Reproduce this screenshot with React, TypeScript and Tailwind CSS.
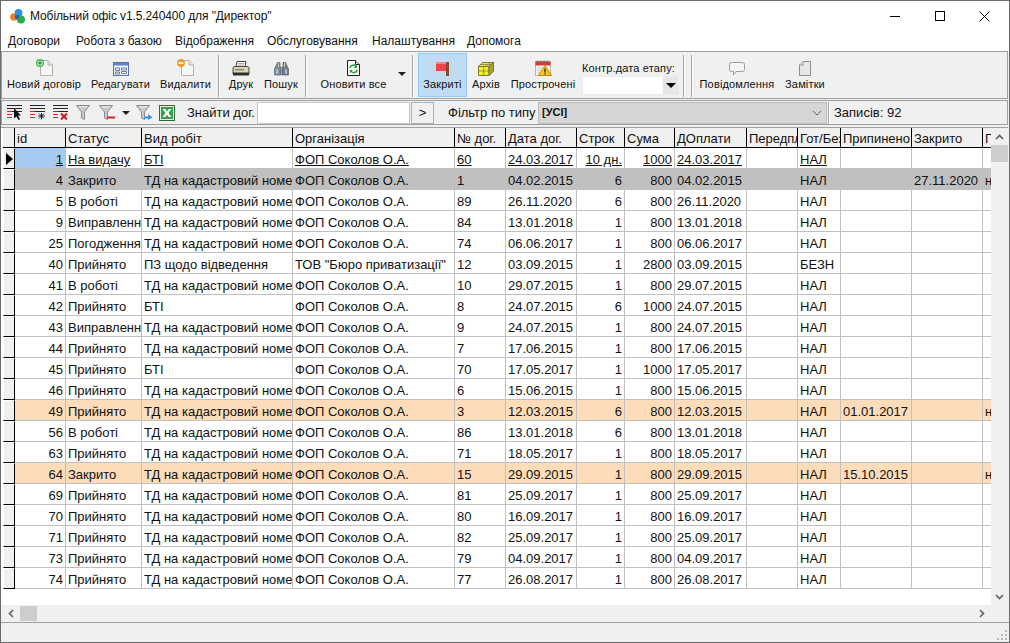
import React from "react";

const TD = "ТД на кадастровий номе";
const FOP = "ФОП Соколов О.А.";
type R = { id: string; st: string; vid: string; org?: string; no: string; d: string; srok: string; sum: string; nal?: string; stop?: string; closed?: string; n?: boolean; tone?: "gray" | "orange" | "first" };
const rows: R[] = [
  { id: "1", st: "На видачу", vid: "БТІ", no: "60", d: "24.03.2017", srok: "10 дн.", sum: "1000", tone: "first" },
  { id: "4", st: "Закрито", vid: TD, no: "1", d: "04.02.2015", srok: "6", sum: "800", closed: "27.11.2020", n: true, tone: "gray" },
  { id: "5", st: "В роботі", vid: TD, no: "89", d: "26.11.2020", srok: "6", sum: "800" },
  { id: "9", st: "Виправлення", vid: TD, no: "84", d: "13.01.2018", srok: "1", sum: "800" },
  { id: "25", st: "Погодження", vid: TD, no: "74", d: "06.06.2017", srok: "1", sum: "800" },
  { id: "40", st: "Прийнято", vid: "ПЗ щодо відведення", org: 'ТОВ "Бюро приватизації"', no: "12", d: "03.09.2015", srok: "1", sum: "2800", nal: "БЕЗН" },
  { id: "41", st: "В роботі", vid: TD, no: "10", d: "29.07.2015", srok: "1", sum: "800" },
  { id: "42", st: "Прийнято", vid: "БТІ", no: "8", d: "24.07.2015", srok: "6", sum: "1000" },
  { id: "43", st: "Виправлення", vid: TD, no: "9", d: "24.07.2015", srok: "1", sum: "800" },
  { id: "44", st: "Прийнято", vid: TD, no: "7", d: "17.06.2015", srok: "1", sum: "800" },
  { id: "45", st: "Прийнято", vid: "БТІ", no: "70", d: "17.05.2017", srok: "1", sum: "1000" },
  { id: "46", st: "Прийнято", vid: TD, no: "6", d: "15.06.2015", srok: "1", sum: "800" },
  { id: "49", st: "Прийнято", vid: TD, no: "3", d: "12.03.2015", srok: "6", sum: "800", stop: "01.01.2017", n: true, tone: "orange" },
  { id: "56", st: "В роботі", vid: TD, no: "86", d: "13.01.2018", srok: "6", sum: "800" },
  { id: "63", st: "Прийнято", vid: TD, no: "71", d: "18.05.2017", srok: "1", sum: "800" },
  { id: "64", st: "Закрито", vid: TD, no: "15", d: "29.09.2015", srok: "1", sum: "800", stop: "15.10.2015", n: true, tone: "orange" },
  { id: "69", st: "Прийнято", vid: TD, no: "81", d: "25.09.2017", srok: "1", sum: "800" },
  { id: "70", st: "Прийнято", vid: TD, no: "80", d: "16.09.2017", srok: "1", sum: "800" },
  { id: "71", st: "Прийнято", vid: TD, no: "82", d: "25.09.2017", srok: "1", sum: "800" },
  { id: "73", st: "Прийнято", vid: TD, no: "79", d: "04.09.2017", srok: "1", sum: "800" },
  { id: "74", st: "Прийнято", vid: TD, no: "77", d: "26.08.2017", srok: "1", sum: "800" },
];

const cols = "grid grid-cols-[12px_51px_76px_151px_162px_51px_71px_48px_50px_72px_51px_43px_71px_71px_8px]";
const heads = ["id", "Статус", "Вид робіт", "Організація", "№ дог.", "Дата дог.", "Строк", "Сума", "ДОплати", "Передплата", "Гот/Безг", "Припинено", "Закрито", "Передано"];

function Logo() {
  return (
    <svg width="16" height="15" viewBox="0 0 16 15">
      <circle cx="4" cy="8" r="3.8" fill="#ee7d2a" />
      <circle cx="8.5" cy="4" r="3.9" fill="#2d93e0" />
      <circle cx="11" cy="10.5" r="4" fill="#27b04a" />
      <circle cx="7" cy="8" r="2.2" fill="#2a5fa6" />
    </svg>
  );
}
function Doc({ badge }: { badge?: string }) {
  return (
    <svg width="17" height="17" viewBox="0 0 17 17">
      <path d="M4.5 1.5H12L16.5 6V16.5H4.5Z" fill="#f6f6f4" stroke="#b5b2a8" />
      <path d="M12 1.5V6H16.5" fill="#e3e1da" stroke="#b5b2a8" />
      {badge === "add" && (
        <g>
          <circle cx="4" cy="4" r="4" fill="#3fb44a" />
          <circle cx="4" cy="4" r="2.6" fill="#fff" />
          <path d="M4 2V6M2 4H6" stroke="#2c9a38" strokeWidth="1.5" />
        </g>
      )}
      {badge === "del" && (
        <g>
          <circle cx="4" cy="4" r="4" fill="#ef9a2d" />
          <path d="M1.5 4H6.5" stroke="#fff" strokeWidth="1.6" />
        </g>
      )}
    </svg>
  );
}
function EditIco() {
  return (
    <svg width="16" height="14" viewBox="0 0 16 14">
      <rect x="0.5" y="0.5" width="15" height="13" fill="#eef3fa" stroke="#5874a8" />
      <rect x="1" y="1" width="14" height="2.5" fill="#5d86c8" />
      <path d="M2.5 6H6.5V8.5H2.5ZM2.5 10H6.5V12H2.5ZM8.5 6H13.5V8H8.5ZM8.5 9.5H13.5V11.5H8.5Z" fill="none" stroke="#4b6596" strokeWidth="0.8" />
    </svg>
  );
}
function Printer() {
  return (
    <svg width="18" height="15" viewBox="0 0 18 15">
      <path d="M5 0.5H14L13 6H4Z" fill="#fff" stroke="#444" />
      <path d="M6 2.5H12.5M5.8 4H12" stroke="#888" strokeWidth="0.7" />
      <path d="M1 7Q1 5.5 3 5.5H15Q17 5.5 17 7V13H1Z" fill="#d8d5b8" stroke="#4a4a3c" />
      <rect x="1" y="11.5" width="16" height="3" fill="#2f2f2a" />
      <rect x="3" y="8" width="9" height="1.5" fill="#8d8a6d" />
    </svg>
  );
}
function Binoc() {
  return (
    <svg width="15" height="14" viewBox="0 0 15 14">
      <path d="M3.5 0.5H6V5H7V13H0.5V7Z" fill="#7b8ba0" stroke="#4a4f58" strokeWidth="0.6" />
      <path d="M11.5 0.5H9V5H8V13H14.5V7Z" fill="#6d7d90" stroke="#4a4f58" strokeWidth="0.6" />
      <path d="M3 7V12M12 7V12" stroke="#eeeeee" />
      <rect x="4" y="1" width="1" height="4" fill="#d9c9a8" />
      <rect x="10" y="1" width="1" height="4" fill="#d9c9a8" />
    </svg>
  );
}
function Refresh() {
  return (
    <svg width="13" height="16" viewBox="0 0 13 16">
      <path d="M0.5 0.5H8.5L12.5 4.5V15.5H0.5Z" fill="#fff" stroke="#222" />
      <path d="M8.5 0.5V4.5H12.5" fill="#ddd" stroke="#222" />
      <path d="M3 8A3.2 3.2 0 0 1 9 6.8M10 9.5A3.2 3.2 0 0 1 4 11" fill="none" stroke="#1fa33a" strokeWidth="1.5" />
      <path d="M10 4.8V8H7ZM3 13V10H6Z" fill="#1fa33a" />
    </svg>
  );
}
function Flag() {
  return (
    <svg width="13" height="14" viewBox="0 0 13 14">
      <rect x="0" y="0" width="10" height="9" fill="#ef4349" />
      <rect x="0" y="0" width="10" height="2" fill="#f8868a" />
      <rect x="10" y="0" width="3" height="14" fill="#8a4a32" />
    </svg>
  );
}
function Cube() {
  return (
    <svg width="16" height="14" viewBox="0 0 16 14">
      <path d="M0.5 4.5H11V13.5H0.5Z" fill="#f5ed2f" stroke="#7d7a2a" />
      <path d="M0.5 4.5L4.5 0.5H15.5L11 4.5Z" fill="#e4df70" stroke="#7d7a2a" />
      <path d="M11 4.5L15.5 0.5V9.5L11 13.5Z" fill="#a9a23a" stroke="#7d7a2a" />
      <path d="M0.5 9H11M5.7 4.5V13.5M3 2.5H13.5M8 4.5L12 0.5" stroke="#7d7a2a" strokeWidth="0.7" fill="none" />
    </svg>
  );
}
function Overdue() {
  return (
    <svg width="17" height="16" viewBox="0 0 17 16">
      <rect x="0.5" y="1.5" width="15" height="14" fill="#f7f4ec" stroke="#b9b5aa" />
      <rect x="0.5" y="1.5" width="15" height="4" fill="#cf3f36" />
      <path d="M3 0.5V3M6 0.5V3M9 0.5V3M12 0.5V3" stroke="#666" />
      <path d="M2 8H7M2 10.5H5M2 13H5" stroke="#c8c3b5" />
      <path d="M10 5.5L16.5 15.5H3.5Z" fill="#f8c91a" stroke="#c48a10" />
      <path d="M10 8.5V12.5M10 13.3V14.5" stroke="#222" strokeWidth="1.3" />
    </svg>
  );
}
function Bubble() {
  return (
    <svg width="16" height="14" viewBox="0 0 16 14">
      <path d="M2.5 0.5H13.5Q15.5 0.5 15.5 2.5V7.5Q15.5 9.5 13.5 9.5H7L4.5 13V9.5H2.5Q0.5 9.5 0.5 7.5V2.5Q0.5 0.5 2.5 0.5Z" fill="#f5f5f3" stroke="#9c9c98" />
    </svg>
  );
}
function Note() {
  return (
    <svg width="12" height="15" viewBox="0 0 12 15">
      <path d="M4 0.5H11.5V14.5H0.5V4Z" fill="#e7e7e5" stroke="#8e8e8a" />
      <path d="M4 0.5V4H0.5" fill="#f8f8f8" stroke="#8e8e8a" />
    </svg>
  );
}
function Lines({ children, rows = 3 }: { children?: React.ReactNode; rows?: number }) {
  return (
    <svg width="16" height="15" viewBox="0 0 16 15">
      <path d="M0 0.5H15M0 3.5H15" stroke="#222" />
      <path d="M0 6.5H5M0 9.5H5M0 12.5H5" stroke="#e02020" />
      <path d="M5 6.5H15" stroke="#222" />
      {children}
    </svg>
  );
}
function Funnel({ children }: { children?: React.ReactNode }) {
  return (
    <svg width="17" height="15" viewBox="0 0 17 15">
      <path d="M0.5 0.5H13.5L8.5 7V14.5L5.5 13V7Z" fill="#c9c9c9" stroke="#8c8c8c" />
      <path d="M3 2H11" stroke="#f2f2f2" />
      {children}
    </svg>
  );
}
function Excel() {
  return (
    <svg width="16" height="16" viewBox="0 0 16 16">
      <rect x="0.5" y="0.5" width="15" height="15" fill="#dfeedd" stroke="#2c6e3a" />
      <rect x="2" y="2" width="12" height="12" fill="#3f9a52" />
      <path d="M3.5 4H6.5L8 6.5L9.5 4H12.5L9.5 8L12.5 12H9.5L8 9.5L6.5 12H3.5L6.5 8Z" fill="#f4f8f0" />
    </svg>
  );
}
function Caret() {
  return <div className="w-0 h-0 border-l-[4px] border-r-[4px] border-t-[4px] border-l-transparent border-r-transparent border-t-[#222]" />;
}

function Btn({ w, label, children, active }: { w: string; label: string; children: React.ReactNode; active?: boolean }) {
  return (
    <div className={`${w} shrink-0 flex flex-col items-center ${active ? "bg-[#c0dcf3] border border-[#90c8f6] h-[44px] mt-[1px]" : "h-[46px]"}`}>
      <div className={`${active ? "h-[22px]" : "h-[24px]"} flex items-end justify-center`}>{children}</div>
      <div className="mt-[2px] text-[11px] leading-[13px] whitespace-nowrap tracking-[0.15px]">{label}</div>
    </div>
  );
}
function Sep() {
  return <div className="w-[2px] h-[42px] mt-[3px] bg-[#a6a6a6] border-r border-[#fafafa] shrink-0" />;
}

function Cell({ children, right, under, className = "" }: { children?: React.ReactNode; right?: boolean; under?: boolean; className?: string }) {
  return (
    <div className={`h-[21px] border-r border-b overflow-hidden whitespace-nowrap leading-[24px] px-[2px] ${right ? "text-right" : ""} ${under ? "underline" : ""} ${className}`}>
      {children}
    </div>
  );
}

export default function App() {
  return (
    <div className="w-[1010px] h-[643px] bg-[#f0f0f0] text-[#111] border-l border-t border-r border-[#6b6b6b] flex flex-col overflow-hidden text-[12px] font-[Liberation_Sans]">
      {/* Title bar */}
      <div className="h-[30px] bg-white flex items-center shrink-0">
        <div className="ml-[9px] w-[20px]"><Logo /></div>
        <div className="text-[12px] tracking-[-0.1px]">Мобільний офіс v1.5.240400 для "Директор"</div>
        <div className="ml-auto flex mr-[2px]">
          <div className="w-[45px] h-[30px] flex items-center justify-center">
            <div className="w-[10px] h-[1px] bg-black" />
          </div>
          <div className="w-[45px] h-[30px] flex items-center justify-center">
            <div className="w-[10px] h-[10px] border border-black" />
          </div>
          <div className="w-[45px] h-[30px] flex items-center justify-center">
            <svg width="11" height="11" viewBox="0 0 11 11"><path d="M0.5 0.5L10.5 10.5M10.5 0.5L0.5 10.5" stroke="#000" fill="none" /></svg>
          </div>
        </div>
      </div>
      {/* Menu */}
      <div className="h-[20px] bg-white flex items-center pl-[7px] shrink-0">
        <span className="w-[68px]">Договори</span>
        <span className="w-[99px]">Робота з базою</span>
        <span className="w-[92px]">Відображення</span>
        <span className="w-[105px]">Обслуговування</span>
        <span className="w-[95px]">Налаштування</span>
        <span>Допомога</span>
      </div>
      {/* Main toolbar */}
      <div className="h-[48px] border border-[#a0a0a0] bg-[#f0f0f0] flex items-start shrink-0 mr-[1px]">
        <Btn w="w-[84px]" label="Новий договір"><Doc badge="add" /></Btn>
        <Btn w="w-[69px]" label="Редагувати"><EditIco /></Btn>
        <Btn w="w-[61px]" label="Видалити"><Doc badge="del" /></Btn>
        <div className="w-[2px]" />
        <Sep />
        <Btn w="w-[42px]" label="Друк"><Printer /></Btn>
        <Btn w="w-[38px]" label="Пошук"><Binoc /></Btn>
        <div className="w-[5px]" />
        <Sep />
        <Btn w="w-[93px]" label="Оновити все"><Refresh /></Btn>
        <div className="w-[8px] -ml-[2px] flex justify-center mt-[20px]"><Caret /></div>
        <div className="w-[6px]" />
        <Sep />
        <div className="w-[4px]" />
        <Btn w="w-[49px]" label="Закриті" active><Flag /></Btn>
        <Btn w="w-[38px]" label="Архів"><Cube /></Btn>
        <Btn w="w-[76px]" label="Прострочені"><Overdue /></Btn>
        <div className="w-[97px] ml-[1px] shrink-0">
          <div className="text-[11px] leading-[13px] mt-[10px] tracking-[0.15px]">Контр.дата етапу:</div>
          <div className="mt-[1px] h-[19px] bg-white border border-[#ececec] flex justify-end">
            <div className="w-[16px] h-[17px] bg-[#e6e6e6] border-l border-[#f8f8f8] flex items-center justify-center">
              <div className="w-0 h-0 border-l-[5px] border-r-[5px] border-t-[5px] border-l-transparent border-r-transparent border-t-black" />
            </div>
          </div>
        </div>
        <div className="w-[4px]" />
        <Sep />
        <div className="w-[6px]" />
        <Sep />
        <Btn w="w-[88px]" label="Повідомлення"><Bubble /></Btn>
        <Btn w="w-[48px]" label="Замітки"><Note /></Btn>
      </div>
      {/* Second toolbar */}
      <div className="h-[25px] border border-[#a0a0a0] bg-[#f0f0f0] flex items-center shrink-0 mr-[1px] mt-[1px] text-[13px]">
        <div className="w-[5px]" />
        <div className="w-[23px]"><Lines><path d="M7 3L7 13.5L9.5 11.5L11.5 15L13 14L11 10.5H14Z" fill="#111" /></Lines></div>
        <div className="w-[23px]"><Lines><path d="M8 11H15M11.5 8V14.5M9 8.5L14 13.5M14 8.5L9 13.5" stroke="#222" strokeWidth="1" /></Lines></div>
        <div className="w-[23px]"><Lines><path d="M8 8.5L14 14.5M14 8.5L8 14.5" stroke="#d01818" strokeWidth="2" /></Lines></div>
        <div className="w-[23px]"><Funnel /></div>
        <div className="w-[23px]"><Funnel><path d="M8 12.5H16" stroke="#d32020" strokeWidth="2" /></Funnel></div>
        <div className="w-[14px] flex"><Caret /></div>
        <div className="w-[23px]"><Funnel><path d="M8 11.5H12V9L16.5 12.5L12 15V13.5H8Z" fill="#3b8fe0" /></Funnel></div>
        <div className="w-[28px]"><Excel /></div>
        <div className="w-[70px]">Знайти дог.</div>
        <div className="w-[153px] h-[22px] bg-white border border-[#c8c8c8]" />
        <div className="w-[23px] h-[22px] ml-[1px] bg-[#f0f0f0] border border-[#b0b0b0] flex items-center justify-center">&gt;</div>
        <div className="w-[14px]" />
        <div className="w-[90px]">Фільтр по типу</div>
        <div className="w-[289px] h-[22px] bg-[#d6d6d6] border border-[#bdbdbd] flex items-center pl-[3px] text-[11px] font-bold">
          <span>[УСІ]</span>
          <svg className="ml-auto mr-[4px]" width="10" height="6" viewBox="0 0 10 6"><path d="M1 1L5 5L9 1" fill="none" stroke="#666" /></svg>
        </div>
        <div className="w-[2px] h-[22px] bg-[#a6a6a6] border-r border-white mx-[1px]" />
        <div className="pl-[3px]">Записів: 92</div>
      </div>
      {/* Grid area */}
      <div className="mt-[2px] flex-1 min-h-0 flex flex-col border-t border-[#a0a0a0] mr-[1px]">
        <div className="flex-1 min-h-0 flex bg-white">
          <div className="w-[990px] shrink-0 flex flex-col overflow-hidden pl-[2px] text-[13px]">
            <div className={`${cols} h-[20px] bg-[#f0f0f0] border-b border-black shrink-0`}>
              <div className="border-r border-black" />
              {heads.map((h, i) => (
                <div key={h} className={`overflow-hidden whitespace-nowrap leading-[21px] pl-[2px] ${i < 13 ? "border-r border-black" : ""}`}>{h}</div>
              ))}
            </div>
            {rows.map((r) => {
              const first = r.tone === "first";
              const bg = r.tone === "gray" ? "bg-[#c0c0c0]" : r.tone === "orange" ? "bg-[#fddcb9]" : "bg-white";
              const c = "border-[#c0c0c0]";
              const nal = r.nal ?? "НАЛ";
              return (
                <div key={r.id} className={`${cols} ${bg} shrink-0`}>
                  <div className="h-[21px] bg-[#f0f0f0] border-r border-b border-r-black border-b-black border-t border-l border-t-white border-l-white flex items-center">
                    {first && <div className="w-0 h-0 ml-[2px] border-l-[7px] border-y-[6px] border-l-black border-y-transparent" />}
                  </div>
                  <Cell right under={first} className={`${c} ${first ? "bg-[#a6caf0]" : ""}`}>{r.id}</Cell>
                  <Cell under={first} className={c}>{r.st}</Cell>
                  <Cell under={first} className={c}>{r.vid}</Cell>
                  <Cell under={first} className={c}>{r.org ?? FOP}</Cell>
                  <Cell under={first} className={c}>{r.no}</Cell>
                  <Cell under={first} className={c}>{r.d}</Cell>
                  <Cell right under={first} className={c}>{r.srok}</Cell>
                  <Cell right under={first} className={c}>{r.sum}</Cell>
                  <Cell under={first} className={c}>{r.d}</Cell>
                  <Cell className={c} />
                  <Cell under={first} className={c}>{nal}</Cell>
                  <Cell className={c}>{r.stop}</Cell>
                  <Cell className={c}>{r.closed}</Cell>
                  <div className={`h-[21px] border-b overflow-hidden leading-[24px] pl-[2px] ${c}`}>{r.n ? "н" : ""}</div>
                </div>
              );
            })}
          </div>
          {/* Vertical scrollbar */}
          <div className="w-[17px] shrink-0 bg-[#f0f0f0] flex flex-col items-center">
            <div className="h-[17px] flex items-center justify-center">
              <svg width="9" height="6" viewBox="0 0 9 6"><path d="M1 5L4.5 1.5L8 5" fill="none" stroke="#606060" strokeWidth="1.6" /></svg>
            </div>
            <div className="w-full h-[17px] bg-[#cdcdcd]" />
            <div className="mt-auto h-[17px] flex items-center justify-center">
              <svg width="9" height="6" viewBox="0 0 9 6"><path d="M1 1L4.5 4.5L8 1" fill="none" stroke="#606060" strokeWidth="1.6" /></svg>
            </div>
          </div>
        </div>
        {/* Horizontal scrollbar */}
        <div className="h-[16px] bg-[#f0f0f0] flex items-center shrink-0">
          <div className="w-[19px] flex justify-center">
            <svg width="6" height="9" viewBox="0 0 6 9"><path d="M5 1L1.5 4.5L5 8" fill="none" stroke="#606060" strokeWidth="1.6" /></svg>
          </div>
          <div className="w-[17px] h-[15px] bg-[#cdcdcd]" />
          <div className="ml-auto mr-[23px]">
            <svg width="6" height="9" viewBox="0 0 6 9"><path d="M1 1L4.5 4.5L1 8" fill="none" stroke="#606060" strokeWidth="1.6" /></svg>
          </div>
        </div>
      </div>
      {/* Status bar */}
      <div className="h-[21px] shrink-0 mt-[1px] bg-[#f0f0f0] border-t border-b border-t-[#a0a0a0] border-b-[#6b6b6b] flex justify-end items-end pr-[2px] pb-[2px]">
        <svg width="11" height="11" viewBox="0 0 11 11"><path d="M9 1h2v2H9zM5 5h2v2H5zM9 5h2v2H9zM1 9h2v2H1zM5 9h2v2H5zM9 9h2v2H9z" fill="#b8b8b8" /></svg>
      </div>
    </div>
  );
}
